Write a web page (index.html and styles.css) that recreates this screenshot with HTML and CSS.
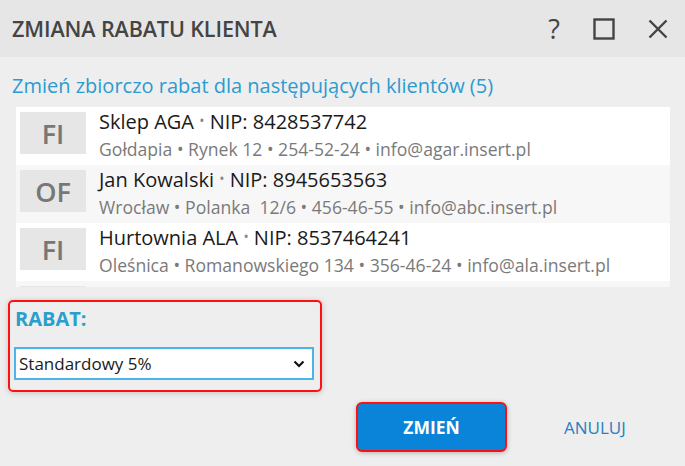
FILE: index.html
```html
<!DOCTYPE html>
<html lang="pl">
<head>
    <meta charset="UTF-8">
    <meta name="viewport" content="width=device-width, initial-scale=1.0">
    <title>Zmiana rabatu klienta</title>
    <link rel="stylesheet" href="styles.css">
</head>
<body>
    <div class="dialog">
        <header class="titlebar">
            <h1>ZMIANA RABATU KLIENTA</h1>
            <div class="window-actions">
                <span class="help">?</span>
                <svg class="icon" width="22" height="22" viewBox="0 0 22 22">
                    <rect x="1.5" y="1.5" width="19" height="19" fill="none" stroke="#444" stroke-width="2.4"/>
                </svg>
                <svg class="icon" width="20" height="20" viewBox="0 0 20 20">
                    <path d="M1.5 1.5 L18.5 18.5 M18.5 1.5 L1.5 18.5" stroke="#444" stroke-width="2.4" fill="none"/>
                </svg>
            </div>
        </header>

        <div class="content">
            <p class="lead">Zmień zbiorczo rabat dla następujących klientów (5)</p>

            <ul class="client-list">
                <li class="client">
                    <div class="avatar">FI</div>
                    <div class="info">
                        <div class="name">Sklep AGA <span class="dot">•</span> NIP: 8428537742</div>
                        <div class="details">Gołdapia • Rynek 12 • 254-52-24 • info@agar.insert.pl</div>
                    </div>
                </li>
                <li class="client">
                    <div class="avatar">OF</div>
                    <div class="info">
                        <div class="name">Jan Kowalski <span class="dot">•</span> NIP: 8945653563</div>
                        <div class="details">Wrocław • Polanka&nbsp; 12/6 • 456-46-55 • info@abc.insert.pl</div>
                    </div>
                </li>
                <li class="client">
                    <div class="avatar">FI</div>
                    <div class="info">
                        <div class="name">Hurtownia ALA <span class="dot">•</span> NIP: 8537464241</div>
                        <div class="details">Oleśnica • Romanowskiego 134 • 356-46-24 • info@ala.insert.pl</div>
                    </div>
                </li>
                <!-- next row only peeks in under the scroll edge -->
                <li class="client">
                    <div class="avatar"></div>
                </li>
            </ul>

            <section class="discount">
                <label class="discount-label">RABAT:</label>
                <div class="select">
                    <span>Standardowy 5%</span>
                    <svg width="12" height="8" viewBox="0 0 12 8">
                        <path d="M1.5 1.5 L6 6 L10.5 1.5" stroke="#111" stroke-width="2.2" fill="none"/>
                    </svg>
                </div>
            </section>

            <div class="buttons">
                <button class="btn-primary">ZMIEŃ</button>
                <button class="btn-link">ANULUJ</button>
            </div>
        </div>
    </div>
</body>
</html>
```

FILE: styles.css
```css
body {
    margin: 0;
    font-family: "Open Sans", "Noto Sans", sans-serif;
    background-color: #eeeeee;
    color: #1a1a1a;
}
.dialog {
    width: 685px;
    height: 466px;
    overflow: hidden;
}
.titlebar {
    height: 57px;
    background-color: #e6e6e6;
    display: flex;
    align-items: center;
    justify-content: space-between;
    padding: 0 17px 0 12px;
}
.titlebar h1 {
    margin: 0;
    font-size: 21.5px;
    font-weight: 600;
    color: #444;
    letter-spacing: -0.1px;
}
.window-actions {
    display: flex;
    align-items: center;
    gap: 33px;
}
.help {
    font-size: 27px;
    color: #444;
    line-height: 1;
}
.content {
    padding: 0 15px 0 8px;
}
.lead {
    margin: 17px 0 9px 4px;
    font-size: 20px;
    line-height: 24px;
    color: #2b9bd0;
}
.client-list {
    list-style: none;
    margin: 0 0 13px 8px;
    padding: 0;
    width: 654px;
    height: 180px;
    overflow: hidden;
    background: white;
}
.client {
    display: flex;
    align-items: flex-start;
    height: 58px;
    padding-left: 4px;
    box-sizing: border-box;
}
.client:nth-child(even) {
    background-color: #f7f7f7;
}
.avatar {
    width: 66px;
    height: 42px;
    margin-top: 5px;
    background-color: #e6e6e6;
    color: #777;
    font-size: 27px;
    font-weight: 600;
    display: flex;
    align-items: center;
    justify-content: center;
    flex-shrink: 0;
}
.info {
    margin-left: 13px;
    padding-top: 3px;
}
.name {
    font-size: 20px;
    line-height: 24px;
    white-space: nowrap;
}
.dot {
    color: #888;
    font-size: 14px;
    position: relative;
    top: -3px;
}
.details {
    font-size: 17.6px;
    line-height: 22px;
    margin-top: 2px;
    color: #7a7a7a;
    white-space: nowrap;
}
.discount {
    width: 300px;
    border: 2px solid #ff1010;
    border-radius: 5px;
    box-shadow: 0 1px 6px rgba(0, 0, 0, 0.18);
    padding: 5px 6px 10px 4px;
}
.discount-label {
    display: block;
    font-size: 20px;
    font-weight: 700;
    color: #2a9fcc;
    margin-left: 1px;
    line-height: 24px;
}
.select {
    margin-top: 16px;
    width: 300px;
    height: 33px;
    box-sizing: border-box;
    border: 2px solid #4db4ea;
    background: white;
    display: flex;
    align-items: center;
    justify-content: space-between;
    padding: 0 7px 0 3px;
    font-size: 17px;
}
.buttons {
    display: flex;
    align-items: center;
    margin: 10px 0 0 348px;
}
.btn-primary {
    width: 151px;
    height: 50px;
    border: 2px solid #ff1010;
    border-radius: 6px;
    background-color: #0a84d8;
    color: white;
    font-family: inherit;
    font-size: 17.5px;
    font-weight: 700;
    box-shadow: 0 1px 5px rgba(0, 0, 0, 0.25);
    cursor: pointer;
}
.btn-link {
    margin-left: 57px;
    border: none;
    background: none;
    color: #2a7fbf;
    font-family: inherit;
    font-size: 17px;
    font-weight: 400;
    padding: 0;
    cursor: pointer;
}
```
